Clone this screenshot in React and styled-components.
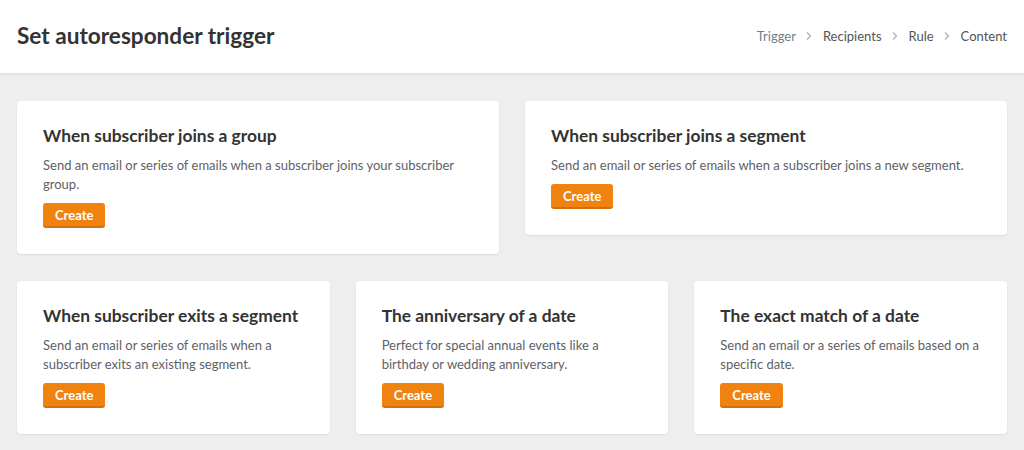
import React from "react";
import styled, { createGlobalStyle } from "styled-components";

const Global = createGlobalStyle`
  html, body { margin: 0; padding: 0; background: #eeeeee; }
  body { font-family: Lato, "Open Sans", Arial, sans-serif; -webkit-font-smoothing: antialiased; }
  * { box-sizing: border-box; }
`;

const Header = styled.header`
  height: 74px;
  background: #fff;
  border-bottom: 1px solid #e2e2e2;
  box-shadow: 0 1px 2px rgba(0,0,0,0.04);
  display: flex;
  align-items: center;
  justify-content: space-between;
  padding: 0 17px 2px;
`;

const PageTitle = styled.h1`
  margin: 0;
  font-size: 22.6px;
  font-weight: 700;
  color: #333;
  letter-spacing: 0;
`;

const Crumbs = styled.nav`
  display: flex;
  align-items: center;
  gap: 9.5px;
  font-size: 13px;
`;

const Crumb = styled.span`
  color: ${(p) => (p.$active ? "#6f7f8c" : "#555")};
`;

const Chevron = () => (
  <svg width="8" height="10" viewBox="0 0 8 10" fill="none">
    <path d="M2 1.5 L5.5 5 L2 8.5" stroke="#b5b5b5" strokeWidth="1.4" />
  </svg>
);

const Main = styled.main`
  padding: 27px 17px;
  display: flex;
  flex-direction: column;
  gap: 27px;
`;

const Row = styled.div`
  display: grid;
  grid-template-columns: repeat(${(p) => p.$cols}, 1fr);
  gap: 26px;
  align-items: start;
`;

const Card = styled.section`
  background: #fff;
  border-radius: 4px;
  box-shadow: 0 1px 2px rgba(0,0,0,0.08);
  padding: 24px 26px 26px;
`;

const CardTitle = styled.h2`
  margin: 0 0 9px;
  font-size: 17.4px;
  line-height: 22px;
  font-weight: 700;
  color: #333;
`;

const Desc = styled.p`
  margin: 0 0 9px;
  font-size: 13px;
  line-height: 19px;
  color: #5f5f66;
`;

const Button = styled.button`
  height: 25px;
  padding: 0 12px;
  border: none;
  border-bottom: 2px solid #d2700a;
  border-radius: 3px;
  background: #f0830f;
  color: #fff;
  font-family: inherit;
  font-size: 13px;
  font-weight: 700;
  cursor: pointer;
`;

const cards1 = [
  {
    title: "When subscriber joins a group",
    desc: "Send an email or series of emails when a subscriber joins your subscriber group.",
  },
  {
    title: "When subscriber joins a segment",
    desc: "Send an email or series of emails when a subscriber joins a new segment.",
  },
];

const cards2 = [
  {
    title: "When subscriber exits a segment",
    desc: "Send an email or series of emails when a subscriber exits an existing segment.",
  },
  {
    title: "The anniversary of a date",
    desc: "Perfect for special annual events like a birthday or wedding anniversary.",
  },
  {
    title: "The exact match of a date",
    desc: "Send an email or a series of emails based on a specific date.",
  },
];

const TriggerCard = ({ title, desc }) => (
  <Card>
    <CardTitle>{title}</CardTitle>
    <Desc>{desc}</Desc>
    <Button>Create</Button>
  </Card>
);

export default function App() {
  return (
    <>
      <Global />
      <Header>
        <PageTitle>Set autoresponder trigger</PageTitle>
        <Crumbs>
          <Crumb $active>Trigger</Crumb>
          <Chevron />
          <Crumb>Recipients</Crumb>
          <Chevron />
          <Crumb>Rule</Crumb>
          <Chevron />
          <Crumb>Content</Crumb>
        </Crumbs>
      </Header>
      <Main>
        <Row $cols={2}>
          {cards1.map((c) => (
            <TriggerCard key={c.title} {...c} />
          ))}
        </Row>
        <Row $cols={3}>
          {cards2.map((c) => (
            <TriggerCard key={c.title} {...c} />
          ))}
        </Row>
      </Main>
    </>
  );
}
